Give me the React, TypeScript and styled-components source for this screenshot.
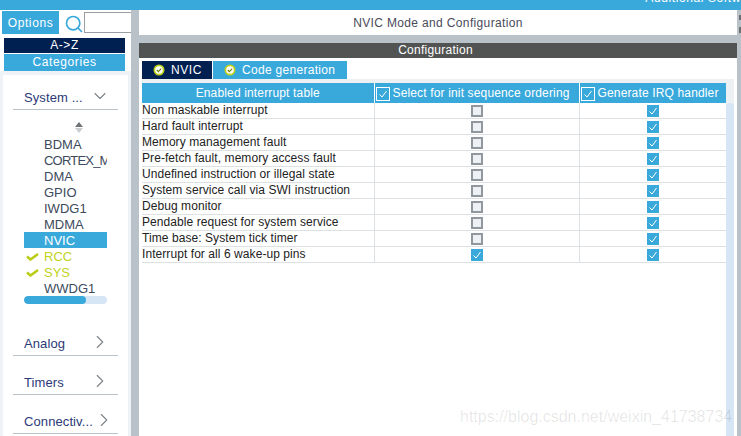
import * as React from 'react'
import styled, { createGlobalStyle } from 'styled-components'
import { ChevronDown, ChevronRight, Search } from 'lucide-react'

const GlobalStyle = createGlobalStyle`
  html, body {
    margin: 0;
    padding: 0;
    width: 741px;
    height: 436px;
    overflow: hidden;
    background: #fff;
    font-family: "Liberation Sans", Arial, sans-serif;
  }
`

const BLUE = '#39a9dc'
const NAVY = '#002052'

const Page = styled.div`
  width: 741px;
  height: 436px;
  display: flex;
  flex-direction: column;
  overflow: hidden;
  position: relative;
`

const TopBar = styled.div`
  height: 10px;
  flex: none;
  background: ${BLUE};
  display: flex;
  justify-content: flex-end;
  overflow: hidden;
  color: #fff;
  font-size: 12px;
  line-height: 0;
  letter-spacing: 0.6px;
  white-space: nowrap;
`

const TopBarLabel = styled.span`
  margin-top: -2px;
`

const Body = styled.div`
  flex: 1;
  display: flex;
  min-height: 0;
`

const Sidebar = styled.aside`
  width: 131px;
  flex: none;
  background: #eff3f7;
  display: flex;
  flex-direction: column;
`

const SearchRow = styled.div`
  height: 28px;
  flex: none;
  background: #fff;
  display: flex;
  align-items: flex-start;
  padding-top: 1px;
  padding-left: 2px;
  box-sizing: border-box;
`

const OptionsButton = styled.div`
  width: 57px;
  height: 23px;
  background: ${BLUE};
  color: #fff;
  font-size: 12px;
  letter-spacing: 0.6px;
  display: flex;
  align-items: center;
  justify-content: center;
`

const SearchIcon = styled.div`
  color: ${BLUE};
  margin: 3px 0 0 5px;
  height: 20px;
  display: flex;
`

const SearchInput = styled.div`
  flex: 1;
  height: 21px;
  margin-top: 1px;
  box-sizing: border-box;
  border: 1px solid #9a9fa3;
  border-right: none;
  background: #fff;
`

const SortBar = styled.div<{ $bg: string; $height: number }>`
  margin-left: 4px;
  width: 121px;
  height: ${({ $height }) => $height}px;
  line-height: ${({ $height }) => $height}px;
  background: ${({ $bg }) => $bg};
  color: #fff;
  font-size: 12px;
  letter-spacing: 0.6px;
  text-align: center;
  flex: none;
`

const SortArea = styled.div`
  background: #fff;
  height: 33px;
  flex: none;
  display: flex;
  flex-direction: column;
  gap: 1px;
`

const Card = styled.div`
  margin: 4px 3px 0 3px;
  flex: 1;
  background: #fff;
  padding: 0 10px;
  display: flex;
  flex-direction: column;
`

const GroupHead = styled.div<{ $height: number }>`
  height: ${({ $height }) => $height}px;
  flex: none;
  box-sizing: border-box;
  border-bottom: 1px solid #b8c2c8;
  display: flex;
  align-items: flex-end;
  justify-content: space-between;
  padding: 0 7px 4px 11px;
  color: #2c3a78;
  font-size: 13px;
  line-height: 15px;
  letter-spacing: 0.1px;
`

const OpenChevron = styled(ChevronDown)`
  color: #7f8488;
  margin: 0 1px -1px 0;
  flex: none;
`

const ClosedChevron = styled(ChevronRight)`
  color: #7f8488;
  margin-bottom: -2px;
  flex: none;
`

const ScrollArrows = styled.div`
  margin: 12px 0 0 61px;
  width: 10px;
  display: flex;
  flex-direction: column;
  align-items: center;
  gap: 1px;
  height: 14px;
`

const Arrow = styled.span<{ $down?: boolean }>`
  width: 0;
  height: 0;
  border-left: 4px solid transparent;
  border-right: 4px solid transparent;
  ${({ $down }) =>
    $down ? 'border-top: 5px solid #c9cdd0;' : 'border-bottom: 5px solid #6f7376;'}
`

const PeripheralList = styled.div`
  margin-left: 11px;
  width: 83px;
  display: flex;
  flex-direction: column;
  overflow: hidden;
`

const Peripheral = styled.div<{ $selected?: boolean; $ok?: boolean; $tight?: boolean }>`
  height: 16px;
  flex: none;
  display: flex;
  align-items: center;
  padding-left: 20px;
  position: relative;
  font-size: 13px;
  letter-spacing: ${({ $tight }) => ($tight ? '-0.8px' : 'normal')};
  white-space: nowrap;
  overflow: hidden;
  background: ${({ $selected }) => ($selected ? BLUE : 'transparent')};
  color: ${({ $selected, $ok }) => ($selected ? '#fff' : $ok ? '#c2d31c' : '#3c4a5c')};
  svg {
    position: absolute;
    left: 2px;
    top: 5px;
  }
`

const HScroll = styled.div`
  height: 8px;
  margin-top: 0;
  border-radius: 4px;
  background: #d6e6f5;
  overflow: hidden;
`

const HScrollThumb = styled.div`
  height: 8px;
  border-radius: 4px;
  background: ${BLUE};
`

const Splitter = styled.div`
  width: 8px;
  flex: none;
  background: #b8c2c8;
`

const Main = styled.main`
  flex: 1;
  display: flex;
  flex-direction: column;
  min-width: 0;
`

const Title = styled.div`
  height: 25px;
  flex: none;
  background: #fff;
  color: #4a4a5a;
  font-size: 12px;
  letter-spacing: 0.35px;
  display: flex;
  align-items: center;
  justify-content: center;
`

const Gap = styled.div`
  height: 8px;
  flex: none;
  background: #b8c2c8;
`

const ConfigBar = styled.div`
  height: 15px;
  flex: none;
  background: #525453;
  color: #fff;
  font-size: 12px;
  line-height: 15px;
  letter-spacing: 0.25px;
  text-align: center;
  padding-right: 5px;
`

const Content = styled.div`
  flex: 1;
  background: #fff;
  display: flex;
  flex-direction: column;
  padding-top: 3px;
  min-height: 0;
`

const Tabs = styled.div`
  display: flex;
  gap: 1px;
  padding-left: 3px;
  height: 18px;
  flex: none;
`

const Tab = styled.div<{ $active?: boolean; $width: number }>`
  width: ${({ $width }) => $width}px;
  background: ${({ $active }) => ($active ? NAVY : BLUE)};
  color: #fff;
  font-size: 12px;
  letter-spacing: ${({ $active }) => ($active ? 0.6 : 0.3)}px;
  display: flex;
  align-items: center;
  padding-left: 11px;
  gap: 6px;
  box-sizing: border-box;
`

const TableArea = styled.div`
  flex: 1;
  display: flex;
  min-height: 0;
  margin: 0 3px;
`

const TableWrap = styled.div`
  width: 584px;
  flex: none;
  padding-top: 4px;
  background: linear-gradient(#edf1f3 4px, #fff 4px);
`

const Table = styled.table`
  border-collapse: collapse;
  table-layout: fixed;
  width: 584px;
`

const HeadCell = styled.th`
  height: 20px;
  padding: 0;
  background: ${BLUE};
  color: #fff;
  font-size: 12px;
  font-weight: 400;
  letter-spacing: 0.15px;
  border-left: 1px solid #fff;
  white-space: nowrap;
  &:first-child {
    border-left: none;
  }
`

const HeadInner = styled.div`
  display: flex;
  align-items: center;
  gap: 3px;
`

const HeadBox = styled.span`
  width: 14px;
  height: 14px;
  box-sizing: border-box;
  border: 1px solid #fff;
  flex: none;
  display: flex;
  align-items: center;
  justify-content: center;
  margin: 1px 0 0 1px;
`

const Cell = styled.td`
  height: 15px;
  padding: 0;
  border: 1px solid #dde1e4;
  border-top: none;
  border-left: none;
  font-size: 12px;
  line-height: 15px;
  letter-spacing: 0.07px;
  color: #222;
  white-space: nowrap;
`

const CenterBox = styled.div`
  display: flex;
  justify-content: center;
  align-items: center;
  height: 15px;
`

const CheckBox = styled.span<{ $checked?: boolean }>`
  width: 12px;
  height: 12px;
  box-sizing: border-box;
  background: ${({ $checked }) => ($checked ? BLUE : '#eef1f3')};
  border: ${({ $checked }) => ($checked ? 'none' : '2px solid #90979e')};
  display: flex;
  align-items: center;
  justify-content: center;
`

const ScrollRail = styled.div`
  width: 8px;
  flex: none;
  background: #edf1f3;
  display: flex;
  flex-direction: column;
`

const VScroll = styled.div`
  flex: 1;
  margin-top: 24px;
  background: #d6e6f5;
  border-radius: 4px 4px 0 0;
`

const RightEdge = styled.div`
  width: 4px;
  flex: none;
  background: #b8c2c8;
  display: flex;
  flex-direction: column;
`

const EdgeMark = styled.span<{ $height: number; $top: number }>`
  width: 2px;
  height: ${({ $height }) => $height}px;
  margin: ${({ $top }) => $top}px 0 0 2px;
  background: #6a6f72;
`

const Watermark = styled.div`
  position: absolute;
  left: 460px;
  top: 408px;
  font-size: 16px;
  line-height: 18px;
  color: rgba(0, 0, 0, 0.1);
  white-space: nowrap;
  pointer-events: none;
`

const Tick = ({ size = 10 }: { size?: number }) => (
  <svg width={size} height={size} viewBox="0 0 10 10" fill="none" stroke="#fff" strokeWidth="1">
    <path d="M1.5 5.5 L4 8 L8.5 2" />
  </svg>
)

const OkMark = () => (
  <svg width="13" height="8" viewBox="0 0 13 8" fill="none" stroke="#b9cc13" strokeWidth="2.5">
    <path d="M1 3.5 L4.5 6.5 L12 1" />
  </svg>
)

const TabIcon = () => (
  <svg width="12" height="12" viewBox="0 0 12 12" fill="none">
    <circle cx="6" cy="6" r="5.5" fill="#c2d31c" />
    <circle cx="6" cy="6" r="3.8" fill="#fff" />
    <path d="M3.8 6 L5.4 7.6 L8.2 4.6" stroke="#6e7d10" strokeWidth="1.1" />
  </svg>
)

const peripherals = [
  { name: 'BDMA' },
  { name: 'CORTEX_M7', tight: true },
  { name: 'DMA' },
  { name: 'GPIO' },
  { name: 'IWDG1' },
  { name: 'MDMA' },
  { name: 'NVIC', selected: true },
  { name: 'RCC', ok: true },
  { name: 'SYS', ok: true },
  { name: 'WWDG1' },
]

const interrupts = [
  { name: 'Non maskable interrupt', init: false },
  { name: 'Hard fault interrupt', init: false },
  { name: 'Memory management fault', init: false },
  { name: 'Pre-fetch fault, memory access fault', init: false },
  { name: 'Undefined instruction or illegal state', init: false },
  { name: 'System service call via SWI instruction', init: false },
  { name: 'Debug monitor', init: false },
  { name: 'Pendable request for system service', init: false },
  { name: 'Time base: System tick timer', init: false },
  { name: 'Interrupt for all 6 wake-up pins', init: true },
]

const App: React.FC = () => {
  return (
    <Page>
      <GlobalStyle />
      <TopBar>
        <TopBarLabel>Additional Softw</TopBarLabel>
      </TopBar>
      <Body>
        <Sidebar>
          <SearchRow>
            <OptionsButton>Options</OptionsButton>
            <SearchIcon>
              <Search size={20} strokeWidth={2} />
            </SearchIcon>
            <SearchInput />
          </SearchRow>
          <SortArea>
            <SortBar $bg={NAVY} $height={15}>A-&gt;Z</SortBar>
            <SortBar $bg={BLUE} $height={17}>Categories</SortBar>
          </SortArea>
          <Card>
            <GroupHead $height={35}>
              System ...
              <OpenChevron size={20} strokeWidth={1.3} />
            </GroupHead>
            <ScrollArrows>
              <Arrow />
              <Arrow $down />
            </ScrollArrows>
            <PeripheralList>
              {peripherals.map((p) => (
                <Peripheral key={p.name} $selected={p.selected} $ok={p.ok} $tight={p.tight}>
                  {p.ok && <OkMark />}
                  {p.name}
                </Peripheral>
              ))}
              <HScroll>
                <HScrollThumb style={{ width: `${(62 / 83) * 100}%` }} />
              </HScroll>
            </PeripheralList>
            <GroupHead $height={52}>
              Analog
              <ClosedChevron size={22} strokeWidth={1.2} />
            </GroupHead>
            <GroupHead $height={39}>
              Timers
              <ClosedChevron size={22} strokeWidth={1.2} />
            </GroupHead>
            <GroupHead $height={39}>
              Connectiv...
              <ClosedChevron size={22} strokeWidth={1.2} />
            </GroupHead>
          </Card>
        </Sidebar>
        <Splitter />
        <Main>
          <Title>NVIC Mode and Configuration</Title>
          <Gap />
          <ConfigBar>Configuration</ConfigBar>
          <Content>
            <Tabs>
              <Tab $active $width={70}>
                <TabIcon />
                NVIC
              </Tab>
              <Tab $width={134}>
                <TabIcon />
                Code generation
              </Tab>
            </Tabs>
            <TableArea>
              <TableWrap>
                <Table>
                  <colgroup>
                    <col style={{ width: 232 }} />
                    <col style={{ width: 205 }} />
                    <col style={{ width: 147 }} />
                  </colgroup>
                  <thead>
                    <tr>
                      <HeadCell>Enabled interrupt table</HeadCell>
                      <HeadCell>
                        <HeadInner>
                          <HeadBox>
                            <Tick />
                          </HeadBox>
                          Select for init sequence ordering
                        </HeadInner>
                      </HeadCell>
                      <HeadCell>
                        <HeadInner>
                          <HeadBox>
                            <Tick />
                          </HeadBox>
                          Generate IRQ handler
                        </HeadInner>
                      </HeadCell>
                    </tr>
                  </thead>
                  <tbody>
                    {interrupts.map((row) => (
                      <tr key={row.name}>
                        <Cell>{row.name}</Cell>
                        <Cell>
                          <CenterBox>
                            <CheckBox $checked={row.init}>{row.init && <Tick />}</CheckBox>
                          </CenterBox>
                        </Cell>
                        <Cell>
                          <CenterBox>
                            <CheckBox $checked>
                              <Tick />
                            </CheckBox>
                          </CenterBox>
                        </Cell>
                      </tr>
                    ))}
                  </tbody>
                </Table>
              </TableWrap>
              <ScrollRail>
                <VScroll />
              </ScrollRail>
            </TableArea>
          </Content>
        </Main>
        <RightEdge>
          <EdgeMark $top={5} $height={5} />
          <EdgeMark $top={7} $height={6} />
        </RightEdge>
      </Body>
      <Watermark>https://blog.csdn.net/weixin_41738734</Watermark>
    </Page>
  )
}

export default App
